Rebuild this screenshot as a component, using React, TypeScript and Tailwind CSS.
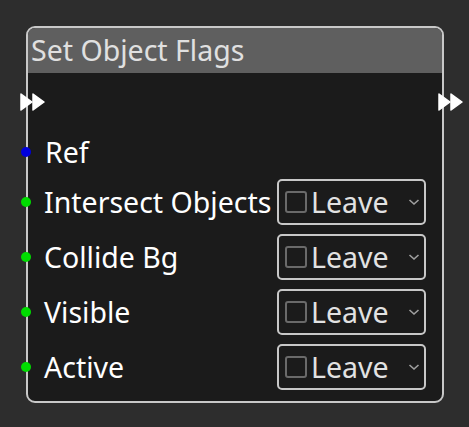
import React from "react";

function Exec({ className }: { className: string }) {
  return (
    <svg className={className} width="25" height="18" viewBox="0 0 25 18">
      <path d="M1 1 L12 9 L1 17 Z" fill="#ffffff" stroke="#ffffff" strokeWidth="1.5" strokeLinejoin="round" />
      <path d="M13 1 L24 9 L13 17 Z" fill="#ffffff" stroke="#ffffff" strokeWidth="1.5" strokeLinejoin="round" />
    </svg>
  );
}

function Dot({ color }: { color: string }) {
  return <span className={`absolute left-[-7px] top-1/2 -translate-y-1/2 w-[10px] h-[10px] rounded-full ${color}`} />;
}

function Select() {
  return (
    <div className="flex items-center w-[149px] h-[46px] border-2 border-[#c8c8c8] rounded-[5px] pl-[6px] pr-[3px]">
      <span className="w-[22px] h-[22px] border-2 border-[#6a6a6a] rounded-[3px] shrink-0" />
      <span className="ml-[4px] text-[28.5px] leading-none text-[#e2e2e2]">Leave</span>
      <svg className="ml-auto mr-[1px]" width="12" height="8" viewBox="0 0 12 8">
        <path d="M1.5 2 L6 6 L10.5 2" fill="none" stroke="#a0a0a0" strokeWidth="1.6" />
      </svg>
    </div>
  );
}

function Row({ label }: { label: string }) {
  return (
    <div className="relative flex items-center justify-between h-[46px] pl-[16px] pr-[16px]">
      <Dot color="bg-[#00dd00]" />
      <span className="text-[28.5px] leading-none text-white">{label}</span>
      <Select />
    </div>
  );
}

export default function App() {
  return (
    <div
      className="w-[469px] h-[427px] bg-[#2d2d2d] pt-[26px] pl-[26px]"
      style={{ fontFamily: '"Noto Sans", "Open Sans", sans-serif' }}
    >
      <div className="relative w-[418px] h-[377px] border-2 border-[#c8c8c8] rounded-[9px] bg-[#1b1b1b] overflow-visible">
        <div className="h-[45px] bg-[#5f5f5f] rounded-t-[7px] flex items-center pl-[3px]">
          <span className="text-[28.5px] leading-none text-[#e0e0e0]">Set Object Flags</span>
        </div>
        <div className="flex flex-col pt-[9px]">
          <div className="relative h-10">
            <Exec className="absolute left-[-8px] top-[11px]" />
            <Exec className="absolute right-[-21px] top-[11px]" />
          </div>
          <div className="relative mt-[10px] h-10 flex items-center pl-[17px]">
            <Dot color="bg-[#0000dd]" />
            <span className="text-[28.5px] leading-none text-white">Ref</span>
          </div>
          <div className="flex flex-col gap-[9px] mt-[7px]">
            <Row label="Intersect Objects" />
            <Row label="Collide Bg" />
            <Row label="Visible" />
            <Row label="Active" />
          </div>
        </div>
      </div>
    </div>
  );
}
